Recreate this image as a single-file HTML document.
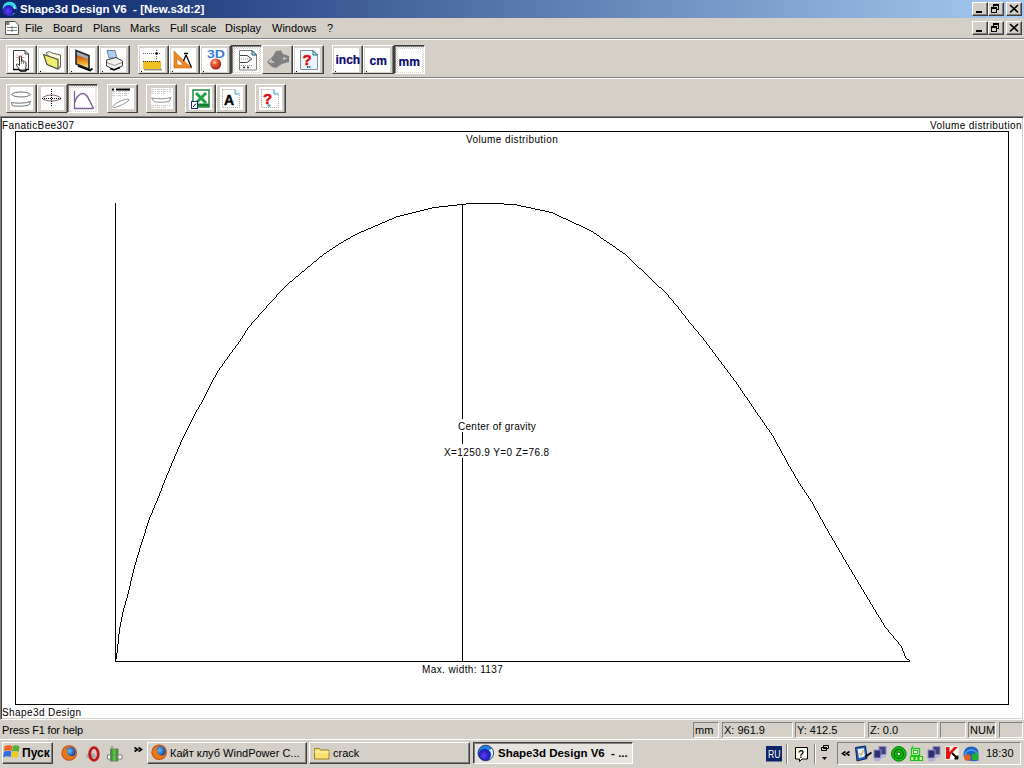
<!DOCTYPE html>
<html><head><meta charset="utf-8"><style>
html,body{margin:0;padding:0;}
body{width:1024px;height:768px;overflow:hidden;position:relative;background:#d4d0c8;font-family:"Liberation Sans",sans-serif;font-size:11px;color:#000;}
.a{position:absolute;}
#title{left:0;top:0;width:1024px;height:18px;background:linear-gradient(to right,#0a246a,#a6caf0);}
.tt{left:20px;top:1px;color:#fff;font-weight:bold;font-size:11.5px;line-height:16px;white-space:pre;}
.cb{width:16px;height:14px;background:#d4d0c8;box-sizing:border-box;border-top:1px solid #fff;border-left:1px solid #fff;border-right:1px solid #404040;border-bottom:1px solid #404040;box-shadow:inset -1px -1px 0 #808080;}
.menu{top:18px;height:20px;line-height:20px;font-size:11px;white-space:pre;}
.b{width:31px;height:29px;box-sizing:border-box;background:#fff;border-top:1px solid #fff;border-left:1px solid #fff;border-right:1px solid #404040;border-bottom:1px solid #404040;box-shadow:inset -1px 0 0 #808080,inset -3px -1px 0 #d4d0c8,inset 1px 2px 0 #d4d0c8;}
.b.v{box-shadow:inset -1px 0 0 #808080,inset -3px -2px 0 #d4d0c8,inset 3px 2px 0 #d4d0c8;}
.b.g{background:#d4d0c8;}
.b.w{box-shadow:inset -1px 0 0 #808080,inset -3px -3px 0 #d4d0c8,inset 4px 3px 0 #d4d0c8;}
.b.p{border-top:1px solid #404040;border-left:1px solid #404040;border-right:1px solid #fff;border-bottom:1px solid #fff;box-shadow:inset 1px 1px 0 #808080;background:repeating-conic-gradient(#d4d0c8 0 25%,#fff 0 50%) 0 0/2px 2px;}
.b.p::before{content:"";position:absolute;left:3px;top:3px;right:2px;bottom:1px;background:#fff;}
.b .d{position:absolute;left:2px;bottom:1px;width:1px;height:1px;background:#000;}
.st{top:722px;height:16px;box-sizing:border-box;border-top:1px solid #808080;border-left:1px solid #808080;border-right:1px solid #fff;border-bottom:1px solid #fff;font-size:11px;line-height:14px;padding-left:1px;white-space:pre;}
.tk{top:742px;height:22px;box-sizing:border-box;background:#d4d0c8;border-top:1px solid #fff;border-left:1px solid #fff;border-right:1px solid #404040;border-bottom:1px solid #404040;box-shadow:inset -1px -1px 0 #808080;font-size:11px;line-height:19px;white-space:pre;overflow:hidden;}
.ct{font-size:10px;letter-spacing:0.4px;white-space:pre;line-height:12px;}
</style></head><body>
<div id="title" class="a"><div class="a tt">Shape3d Design V6  - [New.s3d:2]</div></div>
<div class="a cb" style="left:972px;top:2px"></div>
<div class="a cb" style="left:972px;top:21px"></div>
<div class="a cb" style="left:988px;top:2px"></div>
<div class="a cb" style="left:988px;top:21px"></div>
<div class="a cb" style="left:1006px;top:2px"></div>
<div class="a cb" style="left:1006px;top:21px"></div>
<div class="a menu" style="left:25px">File</div>
<div class="a menu" style="left:53px">Board</div>
<div class="a menu" style="left:93px">Plans</div>
<div class="a menu" style="left:130px">Marks</div>
<div class="a menu" style="left:170px">Full scale</div>
<div class="a menu" style="left:225px">Display</div>
<div class="a menu" style="left:272px">Windows</div>
<div class="a menu" style="left:327px">?</div>
<div class="a" style="left:0;top:38px;width:1024px;height:1px;background:#808080"></div>
<div class="a" style="left:0;top:39px;width:1024px;height:1px;background:#fff"></div>
<div class="a b " style="left:6px;top:45px"></div>
<div class="a b " style="left:37px;top:45px"><div class="d"></div></div>
<div class="a b " style="left:68px;top:45px"><div class="d"></div></div>
<div class="a b " style="left:99px;top:45px"><div class="d"></div></div>
<div class="a b " style="left:138px;top:45px"><div class="d"></div></div>
<div class="a b " style="left:169px;top:45px"><div class="d"></div></div>
<div class="a b " style="left:200px;top:45px"><div class="d"></div></div>
<div class="a b p" style="left:231px;top:45px"></div>
<div class="a b g" style="left:262px;top:45px"></div>
<div class="a b " style="left:293px;top:45px"><div class="d"></div></div>
<div class="a b " style="left:332px;top:45px"><div class="d"></div></div>
<div class="a b " style="left:363px;top:45px"><div class="d"></div></div>
<div class="a b p" style="left:394px;top:45px"></div>
<div class="a" style="left:0;top:77px;width:1024px;height:1px;background:#808080"></div>
<div class="a" style="left:0;top:78px;width:1024px;height:1px;background:#fff"></div>
<div class="a b v" style="left:6px;top:84px"></div>
<div class="a b v" style="left:37px;top:84px"></div>
<div class="a b p" style="left:67px;top:84px"></div>
<div class="a b w" style="left:107px;top:84px"></div>
<div class="a b w" style="left:146px;top:84px"></div>
<div class="a b v" style="left:185px;top:84px"></div>
<div class="a b v" style="left:216px;top:84px"></div>
<div class="a b v" style="left:255px;top:84px"></div>
<div class="a" style="left:0;top:116px;width:1024px;height:604px;background:#fff;box-sizing:border-box;border-top:1px solid #808080;border-left:1px solid #808080;border-right:1px solid #fff;border-bottom:1px solid #fff;box-shadow:inset 1px 1px 0 #404040,inset -1px -1px 0 #d4d0c8"></div>
<div class="a" style="left:2px;top:723px;font-size:11px;line-height:14px;letter-spacing:-0.17px">Press F1 for help</div>
<div class="a st" style="left:693px;width:26px">mm</div>
<div class="a st" style="left:722px;width:71px">X: 961.9</div>
<div class="a st" style="left:795px;width:70px">Y: 412.5</div>
<div class="a st" style="left:868px;width:70px">Z: 0.0</div>
<div class="a st" style="left:940px;width:26px"></div>
<div class="a st" style="left:968px;width:28px">NUM</div>
<div class="a st" style="left:999px;width:24px"></div>
<div class="a" style="left:0;top:739px;width:1024px;height:29px;background:#d4d0c8;border-top:1px solid #fff"></div>
<div class="a tk" style="left:2px;width:51px;font-weight:bold;font-size:12px;padding-left:19px;line-height:20px">Пуск</div>
<div class="a tk" style="left:147px;width:160px;padding-left:22px;line-height:20px">Кайт клуб WindPower C...</div>
<div class="a tk" style="left:309px;width:161px;padding-left:23px;line-height:20px">crack</div>
<div class="a tk" style="left:473px;width:160px;padding-left:24px;font-weight:bold;font-size:11.5px;border-top:1px solid #404040;border-left:1px solid #404040;border-right:1px solid #fff;border-bottom:1px solid #fff;box-shadow:inset 1px 1px 0 #808080;background:#e6e3de;line-height:21px">Shape3d Design V6  - ...</div>
<div class="a" style="left:837px;top:742px;width:184px;height:23px;box-sizing:border-box;border-top:1px solid #808080;border-left:1px solid #808080;border-right:1px solid #fff;border-bottom:1px solid #fff"></div>
<div class="a" style="left:986px;top:746px;font-size:11px;line-height:14px">18:30</div>
<svg class="a" style="left:0;top:0" width="1024" height="768" viewBox="0 0 1024 768">
<defs>
<linearGradient id="fire" x1="0" y1="0" x2="0" y2="1"><stop offset="0" stop-color="#8090b0"/><stop offset="0.35" stop-color="#d06010"/><stop offset="0.7" stop-color="#f0b030"/><stop offset="1" stop-color="#fff8d0"/></linearGradient>
<radialGradient id="ball" cx="0.4" cy="0.35" r="0.65"><stop offset="0" stop-color="#ffe0c0"/><stop offset="0.35" stop-color="#f06040"/><stop offset="1" stop-color="#a02010"/></radialGradient>
<radialGradient id="globe" cx="0.45" cy="0.55" r="0.6"><stop offset="0" stop-color="#6040ff"/><stop offset="1" stop-color="#1010a0"/></radialGradient>
<pattern id="dots" width="2" height="2" patternUnits="userSpaceOnUse"><rect width="1" height="1" fill="#c0c0c0"/><rect x="1" y="1" width="1" height="1" fill="#c0c0c0"/></pattern>
</defs>
<!-- title icon -->
<clipPath id="gclip"><circle cx="9.7" cy="8.6" r="7.2"/></clipPath>
<g clip-path="url(#gclip)">
<circle cx="9.7" cy="8.6" r="7.2" fill="#38d8e8"/>
<circle cx="8.6" cy="10.6" r="5.6" fill="url(#globe)"/>
<circle cx="15.5" cy="11" r="2.5" fill="#102060"/>
</g>
<path d="M14 7 L15 9" stroke="#e0ffff" stroke-width="1.2"/>
<!-- menu doc icon -->
<path d="M5.5 21.5 H15 L18.5 25 V34.5 H5.5 Z" fill="#fff" stroke="#505050"/>
<rect x="6" y="22" width="3.5" height="3" fill="#808080"/>
<path d="M7 27.5 H17 M7 30.5 H17" stroke="#808080" stroke-width="1.2"/>
<path d="M12 26 V32" stroke="#606060" stroke-width="0.8"/>
<!-- title bar glyphs (both rows) -->
<g>
<rect x="976" y="11" width="6" height="2" fill="#000" shape-rendering="crispEdges"/>
<g shape-rendering="crispEdges">
<rect x="993" y="4" width="6" height="2" fill="#000"/><rect x="993" y="6" width="1" height="1" fill="#000"/><rect x="998" y="6" width="1" height="4" fill="#000"/><rect x="996" y="9" width="2" height="1" fill="#000"/>
<rect x="991" y="7" width="6" height="6" fill="#d4d0c8"/><rect x="991" y="7" width="6" height="2" fill="#000"/><rect x="991" y="9" width="1" height="4" fill="#000"/><rect x="996" y="9" width="1" height="4" fill="#000"/><rect x="991" y="12" width="6" height="1" fill="#000"/>
</g>
<path d="M1010 5 L1018 12.5 M1018 5 L1010 12.5" stroke="#000" stroke-width="1.7"/>
</g>
<g transform="translate(0,19)">
<rect x="976" y="11" width="6" height="2" fill="#000" shape-rendering="crispEdges"/>
<g shape-rendering="crispEdges">
<rect x="993" y="4" width="6" height="2" fill="#000"/><rect x="993" y="6" width="1" height="1" fill="#000"/><rect x="998" y="6" width="1" height="4" fill="#000"/><rect x="996" y="9" width="2" height="1" fill="#000"/>
<rect x="991" y="7" width="6" height="6" fill="#d4d0c8"/><rect x="991" y="7" width="6" height="2" fill="#000"/><rect x="991" y="9" width="1" height="4" fill="#000"/><rect x="996" y="9" width="1" height="4" fill="#000"/><rect x="991" y="12" width="6" height="1" fill="#000"/>
</g>
<path d="M1010 5 L1018 12.5 M1018 5 L1010 12.5" stroke="#000" stroke-width="1.7"/>
</g>

<!-- TB1 b1: doc + hand -->
<path d="M13.5 50.5 H25 L28.5 54 V69.5 H13.5 Z" fill="#fff" stroke="#404040"/>
<path d="M25 50.5 V54 H28.5" fill="none" stroke="#404040"/>
<path d="M13 69.5 H19 L20.5 71 H25.5 L26.5 69.5 H29" stroke="#000" stroke-width="1.6" fill="none"/>
<path d="M16.5 54.5 L23.5 60.5 M23.5 54.5 L16.5 60.5 M15.5 57.5 H24.5" stroke="#e89090" stroke-width="0.9"/>
<path d="M19.5 56.5 Q20.5 55.5 21.5 56.5 V61 L23 61 L24.5 61.5 L26 62.5 V67 L25 70 H20 L16.5 65.5 Q16 64 17.5 64 L19.5 65.5 Z" fill="#fff" stroke="#303030" stroke-width="1"/>
<path d="M21.5 61 V64 M23.5 61.5 V64" stroke="#606060" stroke-width="0.8"/>
<!-- TB1 b2: folder -->
<path d="M46 53 L49.5 51.5 L52 53 L60.5 55 V66.5 L58 69 Z" fill="#fffbe0" stroke="#606050"/>
<path d="M43.5 54.5 L58 59.5 V69 L47 64.5 Z" fill="#eef070" stroke="#505040" stroke-width="1.2"/>
<path d="M58 69 L61 66" stroke="#707070" stroke-width="1.5"/>
<!-- TB1 b3: picture -->
<path d="M76 50.5 L89 55.5 V69 L76 64 Z" fill="url(#fire)" stroke="#202830" stroke-width="1.6"/>
<path d="M77 52 L88 56.5 V59 L77 55 Z" fill="#a0b0c8"/>
<path d="M78 66 L90 70.5 L92.5 68.5" stroke="#000" stroke-width="1.8" fill="none"/>
<!-- TB1 b4: printer -->
<path d="M107 50.5 H115 L117 58 H109 Z" fill="#b0d0f0" stroke="#7080a0"/>
<path d="M106.5 60 L116 57.5 L122.5 61 V66 L114 69.5 L106.5 66 Z" fill="#f0f0f0" stroke="#404040"/>
<path d="M107 62.5 L114.5 65.5 L122 62.5" stroke="#909090" fill="none"/>
<path d="M110 68.5 L114 70 L120 67.5" stroke="#000" stroke-width="1.4" fill="none"/>
<!-- TB1 b5: ruler -->
<path d="M143 53.5 H161" stroke="#606060" stroke-dasharray="1 1"/>
<path d="M156.5 50 V60" stroke="#606060" stroke-dasharray="1 1"/>
<rect x="155.5" y="52.5" width="2" height="2" fill="#000"/>
<rect x="143" y="61" width="18" height="8" fill="#f0c020"/>
<path d="M143 61.5 H161" stroke="#303030" stroke-dasharray="1 1"/>
<rect x="144" y="69" width="18" height="1.5" fill="#909090"/>
<!-- TB1 b6: triangle+compass -->
<path d="M174 51 L191.5 68 H174 Z M177 58.5 V65 H183.5 Z" fill="#f08a20" fill-rule="evenodd" stroke="#c06010" stroke-width="0.6"/>
<path d="M186 55 L183.5 61 M186 55 L191.5 67.5" stroke="#000" stroke-width="1.3"/>
<path d="M184 53.5 H188" stroke="#000" stroke-width="1.5"/>
<!-- TB1 b7: 3D ball -->
<text x="207" y="57.5" font-family="Liberation Sans" font-weight="bold" font-size="10" fill="#3c7ce0" textLength="18" lengthAdjust="spacingAndGlyphs">3D</text>
<circle cx="215.7" cy="64" r="5.5" fill="url(#ball)"/>
<!-- TB1 b8: doc with board -->
<path d="M239.5 50.5 H252 L256.5 55 V70 H239.5 Z" fill="#fff" stroke="#808080"/>
<path d="M252 50.5 V55 H256.5 Z" fill="#c0f0ff" stroke="#205060"/>
<path d="M240 55.5 H247 L252 59 L247 62.5 H240" fill="none" stroke="#404040"/>
<path d="M241 59 H253 M241 65.5 H253" stroke="#909090" stroke-dasharray="1 1"/>
<path d="M243 67.5 h2 M247 67.5 h2" stroke="#303030" stroke-width="1.3"/>
<!-- TB1 b9: disabled gray -->
<path d="M267 62 L273 56 L276 51 L281 50.5 L283 54 L289 56 V62 L282 64 L276 68 L272 67 Z" fill="#808080"/>
<path d="M269 62 L272 59.5 M270 62 H274 M284 57 V60 M286 58 V59" stroke="#fff" stroke-width="0.9"/>
<!-- TB1 b10: ? doc -->
<path d="M300.5 50.5 H313 L317.5 55 V69.5 H300.5 Z" fill="#e8f6fa" stroke="#8090a0"/>
<path d="M313 50.5 V55 H317.5 Z" fill="#d0f0ff" stroke="#206080"/>
<text x="302.5" y="64.5" font-family="Liberation Sans" font-weight="bold" font-size="15" fill="#d81010" stroke="#d81010" stroke-width="0.5">?</text>
<rect x="307" y="66" width="1.5" height="2" fill="#604080"/><rect x="309" y="66" width="1.5" height="2" fill="#20a0a0"/>
<!-- inch cm mm -->
<text x="335.5" y="64.3" font-family="Liberation Sans" font-weight="bold" font-size="12" fill="#0a0a70" stroke="#0a0a70" stroke-width="0.2">inch</text>
<text x="369.5" y="64.5" font-family="Liberation Sans" font-weight="bold" font-size="12" fill="#0a0a70" stroke="#0a0a70" stroke-width="0.2">cm</text>
<text x="398.5" y="65.6" font-family="Liberation Sans" font-weight="bold" font-size="12" fill="#0a0a70" stroke="#0a0a70" stroke-width="0.2">mm</text>

<!-- TB2 b1: hull outlines -->
<path d="M11.5 94.5 C14 91.2 28 91.2 30.5 94.5 C28 97.8 14 97.8 11.5 94.5 Z" fill="none" stroke="#707070"/>
<path d="M11.5 102.5 C16 103.5 26 103.5 30.5 101.5 L29 105 C24 106.5 15 106.5 12 105.5 Z" fill="none" stroke="#707070"/>
<!-- TB2 b2: lens with cross -->
<path d="M42 98.5 C46 93.8 57 93.8 61 98.5 C57 101.8 46 101.8 42 98.5 Z" fill="none" stroke="#806070"/>
<g shape-rendering="crispEdges"><path d="M51.5 89 V107 M42 98.5 H61" stroke="#000" stroke-dasharray="1 1"/></g>
<!-- TB2 b3: volume icon -->
<path d="M74.5 91 V108.5 H93.5" fill="none" stroke="#806098" stroke-width="1.3"/>
<path d="M75 102 C76 98 78.5 95 81 93.8 C83 93 85 93.5 87 96 C89 99 91 104 93.5 108.5" fill="none" stroke="#806098" stroke-width="1.4"/>
<!-- TB2 b4 -->
<rect x="112" y="88.5" width="2" height="2" fill="#000"/>
<rect x="116" y="88.5" width="14" height="2" fill="#000"/>
<path d="M112 91.5 h18 M112 93.5 h18 M112 95.5 h16" stroke="#b4b4b4" stroke-dasharray="3 1 1 1" stroke-width="0.7"/>
<path d="M113 106 C115 103 126 98 129 99.5 C130 101 118 107 115 107.5 C113.5 107.8 112.5 107 113 106 Z" fill="none" stroke="#909090"/>
<!-- TB2 b5 -->
<path d="M151 89.5 h20 M151 91.5 h20 M151 93.5 h14 M151 105.5 h20 M151 107.5 h16" stroke="#b4b4b4" stroke-dasharray="3 1 1 1" stroke-width="0.7"/>
<path d="M151.5 98 C157 99 166 99 171 97.5 L169 101.5 C164 102.5 157 102.5 154 101.5 Z" fill="none" stroke="#909090"/>
<!-- TB2 b6: excel -->
<rect x="193" y="90" width="16" height="17" fill="#fff" stroke="#108030" stroke-width="1.4"/>
<path d="M196 93 L206 103 M206 93 L196 103" stroke="#20a040" stroke-width="3"/>
<rect x="193" y="103.5" width="16" height="3" fill="#108030"/>
<rect x="191.5" y="101.5" width="6" height="7" fill="#fff" stroke="#203080"/>
<path d="M193 107 L196 103.5" stroke="#000"/>
<!-- TB2 b7: A doc -->
<path d="M222.5 89.5 H235 L239.5 94 V107.5 H222.5 Z" fill="#fff" stroke="#a0a0a0" stroke-dasharray="1 1"/>
<path d="M235 89.5 V94 H239.5" fill="#e0f8ff" stroke="#40a0c0"/>
<text x="224" y="104.5" font-family="Liberation Sans" font-weight="bold" font-size="14" fill="#000" stroke="#000" stroke-width="0.4">A</text>
<!-- TB2 b8: ? doc -->
<path d="M261.5 89.5 H274 L278.5 94 V107.5 H261.5 Z" fill="#fff" stroke="#a0a0a0" stroke-dasharray="1 1"/>
<path d="M274 89.5 V94 H278.5" fill="#e0f8ff" stroke="#40a0c0"/>
<text x="263" y="104" font-family="Liberation Sans" font-weight="bold" font-size="15" fill="#d81010" stroke="#d81010" stroke-width="0.5">?</text>
<rect x="267.5" y="104.5" width="3" height="2" fill="#40a0a0"/>


<defs>
<radialGradient id="ffx" cx="0.5" cy="0.5" r="0.5"><stop offset="0" stop-color="#f8c040"/><stop offset="0.8" stop-color="#e87010"/><stop offset="1" stop-color="#b04010"/></radialGradient>
<radialGradient id="ffb" cx="0.4" cy="0.4" r="0.6"><stop offset="0" stop-color="#60c0ff"/><stop offset="1" stop-color="#1040a0"/></radialGradient>
<linearGradient id="grn" x1="0" y1="0" x2="1" y2="0"><stop offset="0" stop-color="#208020"/><stop offset="0.5" stop-color="#60d040"/><stop offset="1" stop-color="#208020"/></linearGradient>
<radialGradient id="s3d" cx="0.4" cy="0.4" r="0.6"><stop offset="0" stop-color="#40a0ff"/><stop offset="1" stop-color="#1020a0"/></radialGradient>
</defs>
<!-- start logo -->
<path d="M4.5 746.5 Q8 744.5 12.5 746 L11.5 751 Q7.5 749.5 4 751.5 Z" fill="#e86420"/>
<path d="M13 746 Q16 744.5 19.5 746.5 L18.5 752 Q15.5 750.5 12 751.5 Z" fill="#50b030"/>
<path d="M4 752 Q7.5 750 11.5 751.5 L10.5 757 Q7 755.5 3 757.5 Z" fill="#3070e0"/>
<path d="M12 752 Q15.5 750.5 18.5 752.5 L17.5 758 Q14.5 756.5 11 757.5 Z" fill="#f0c820"/>
<!-- quick launch firefox -->
<circle cx="69.2" cy="753" r="7.8" fill="url(#ffx)"/>
<circle cx="70.5" cy="752" r="5" fill="url(#ffb)"/>
<path d="M62 751 Q63 757 69 758.5 Q73 758.5 75 756 Q71 757 68.5 755 Q66.5 753 67.5 749.5 Q65 750 64.5 752 Z" fill="#e87818"/>
<!-- opera -->
<ellipse cx="91" cy="756" rx="5" ry="3" fill="#909090" opacity="0.6"/>
<ellipse cx="94" cy="754" rx="4.3" ry="6.3" fill="none" stroke="#c01818" stroke-width="2.8"/>
<!-- phone quick -->
<rect x="110.5" y="749" width="7.5" height="12" fill="url(#grn)" stroke="#708070"/>
<path d="M112 749 V746" stroke="#809080" stroke-width="1.5"/>
<path d="M107.5 755 h3 v4 h-3z M118 755 h4 v4 h-4z" fill="#fff" stroke="#808080"/>
<path d="M111 755 H118" stroke="#708070"/>
<!-- >> -->
<path d="M134.5 747.5 L137.5 749.5 L134.5 751.5 M138.5 747.5 L141.5 749.5 L138.5 751.5" fill="none" stroke="#000" stroke-width="1.6"/>
<!-- task firefox -->
<circle cx="159.2" cy="752.3" r="7.8" fill="url(#ffx)"/>
<circle cx="160.5" cy="751.3" r="5" fill="url(#ffb)"/>
<path d="M152 750.3 Q153 756.3 159 757.8 Q163 757.8 165 755.3 Q161 756.3 158.5 754.3 Q156.5 752.3 157.5 748.8 Q155 749.3 154.5 751.3 Z" fill="#e87818"/>
<!-- folder crack -->
<path d="M314.5 748.5 h5 l1 1.5 h8.5 v9 h-14.5 z" fill="#f8e070" stroke="#a08020"/>
<path d="M314.5 752 h14.5" stroke="#fff8c0"/>
<!-- shape3d task icon -->
<clipPath id="tclip"><circle cx="485.8" cy="753" r="7.8"/></clipPath>
<g clip-path="url(#tclip)">
<circle cx="485.8" cy="753" r="7.8" fill="#2080e0"/>
<circle cx="484.5" cy="755" r="6" fill="url(#globe)"/>
<path d="M489 750 Q493 753 490 759 L494 760 V748 Z" fill="#f0f8ff"/>
</g>
<circle cx="485.8" cy="753" r="7.8" fill="none" stroke="#102060" stroke-width="0.8"/>
<!-- RU -->
<rect x="766" y="746" width="16" height="15.5" fill="#0a246a"/>
<text x="768" y="757.6" font-family="Liberation Sans" font-size="10" fill="#fff" textLength="12.5" lengthAdjust="spacingAndGlyphs">RU</text>
<!-- separators -->
<path d="M786.5 744 V764" stroke="#808080"/><path d="M787.5 744 V764" stroke="#fff"/>
<path d="M814.5 744 V764" stroke="#808080"/><path d="M815.5 744 V764" stroke="#fff"/>
<!-- help bubble -->
<path d="M795.5 747.5 H807.5 V759 H802 L799.5 761.5 V759 H795.5 Z" fill="#fffff0" stroke="#000"/>
<text x="798" y="757.5" font-family="Liberation Sans" font-weight="bold" font-size="10" fill="#000">?</text>
<!-- restore glyph -->
<path d="M823.5 745.5 h5 v3 h-5z M821.5 747.5 h5 v3 h-5z" fill="#d4d0c8" stroke="#000"/>
<path d="M822 757 h5 l-2.5 3 z" fill="#000"/>
<!-- << -->
<path d="M845.5 751.5 L842.5 753.5 L845.5 755.5 M849.5 751.5 L846.5 753.5 L849.5 755.5" fill="none" stroke="#000" stroke-width="1.6"/>
<!-- tray icon1 doc -->
<path d="M855.5 747.5 L865.5 746 L867 758.5 L857 761 Z" fill="#2060c0" stroke="#102050"/>
<path d="M857.5 749 L864 748.3 L865 756.5 L859 758 Z" fill="#e8f0ff"/>
<path d="M859.5 753 L861 755.5 L863.5 750" fill="none" stroke="#e0a020" stroke-width="1"/>
<path d="M865 757 L871.5 752.5" stroke="#101010" stroke-width="2"/>
<!-- tray network -->
<rect x="879" y="746.5" width="7" height="8" fill="#404080" stroke="#9090c0"/>
<rect x="874" y="750" width="7" height="8" fill="#303070" stroke="#9090c0"/>
<ellipse cx="877.5" cy="760" rx="3.5" ry="1.3" fill="#b0b0e0"/>
<ellipse cx="883" cy="756.5" rx="3" ry="1.2" fill="#b0b0e0"/>
<!-- green circle -->
<circle cx="898.8" cy="753.9" r="7.3" fill="#10c010" stroke="#008000"/>
<circle cx="898.8" cy="753.9" r="4.5" fill="none" stroke="#006000" stroke-width="1.2"/>
<circle cx="898.8" cy="753.9" r="1.8" fill="#e0ffe0" stroke="#006000"/>
<!-- green phone tray -->
<path d="M912.5 745.5 V748" stroke="#30d030" stroke-width="1.4"/>
<rect x="911.5" y="748.5" width="8" height="7" fill="#b0ff90" stroke="#20c020" stroke-width="1.3"/>
<rect x="913.5" y="750.5" width="4" height="3" fill="#fff" stroke="#20a020" stroke-width="0.8"/>
<path d="M910.5 756.5 h3.5 v4 h-3.5z M915 756.5 h3 v4 h-3z M919 756.5 h3.5 v4 h-3.5z" fill="#c0ff90" stroke="#20c020" stroke-width="1.2"/>
<!-- tray network 2 -->
<rect x="933" y="746.5" width="7" height="8" fill="#404080" stroke="#9090c0"/>
<rect x="928" y="750" width="7" height="8" fill="#303070" stroke="#9090c0"/>
<ellipse cx="931.5" cy="760" rx="3.5" ry="1.3" fill="#b0b0e0"/>
<ellipse cx="937" cy="756.5" rx="3" ry="1.2" fill="#b0b0e0"/>
<!-- kaspersky -->
<rect x="945.5" y="746.5" width="13" height="13" fill="#fff"/>
<path d="M946 747 H949.5 V752 L954 747 H958 L951 754 L949.5 759 H946 Z" fill="#e81010"/>
<path d="M952 753 L957 758 M954.5 758.5 H957.5 V755.5" stroke="#000" stroke-width="1.8" fill="none"/>
<!-- blue/orange icon -->
<path d="M963.5 756 Q963 747 971 746.5 Q978.5 746.5 978.5 753 V760.5 Q972 762 966 760 Z" fill="#2060c0"/>
<path d="M965 755 Q966 750 972 750 Q977 751 977.5 755" fill="none" stroke="#40a0ff" stroke-width="1.5"/>
<circle cx="967.5" cy="757.5" r="3.3" fill="#e06020"/>
<path d="M972 754 L978 753 V760 L972 760 Z" fill="#20b030"/>

<g shape-rendering="crispEdges"><rect x="15.5" y="131.5" width="993" height="573" fill="none" stroke="#000"/>
<path d="M115.5 203 V661.5 H910" fill="none" stroke="#000"/>
<path d="M462.5 204 V661" fill="none" stroke="#000"/>
<rect x="455" y="419" width="84" height="13" fill="#fff"/><rect x="442" y="444" width="110" height="14" fill="#fff"/>
</g>
<path d="M396 216h4v1h-4zM559 216h2v1h-2zM382 222h3v1h-3zM572 222h2v1h-2zM392 218h2v1h-2zM563 218h3v1h-3zM320 256h2v1h-2zM404 214h4v1h-4zM555 214h2v1h-2zM448 205h9v1h-9zM517 205h4v1h-4zM357 233h2v1h-2zM594 233h2v1h-2zM341 242h2v1h-2zM607 242h2v1h-2zM302 271h2v1h-2zM424 209h4v1h-4zM535 209h5v1h-5zM366 229h2v1h-2zM587 229h2v1h-2zM466 203h38v1h-38zM389 219h3v1h-3zM566 219h2v1h-2zM339 243h2v1h-2zM457 204h9v1h-9zM504 204h13v1h-13zM361 231h3v1h-3zM591 231h2v1h-2zM907 659h2v1h-2zM344 240h2v1h-2zM604 240h2v1h-2zM324 253h2v1h-2zM623 253h2v1h-2zM428 208h4v1h-4zM531 208h4v1h-4zM439 206h9v1h-9zM521 206h5v1h-5zM408 213h4v1h-4zM553 213h2v1h-2zM353 235h2v1h-2zM597 235h2v1h-2zM387 220h2v1h-2zM568 220h2v1h-2zM314 261h2v1h-2zM432 207h7v1h-7zM526 207h5v1h-5zM364 230h2v1h-2zM589 230h2v1h-2zM420 210h4v1h-4zM540 210h5v1h-5zM373 226h2v1h-2zM581 226h2v1h-2zM659 287h2v1h-2zM333 247h2v1h-2zM416 211h4v1h-4zM545 211h4v1h-4zM296 276h2v1h-2zM368 228h3v1h-3zM585 228h2v1h-2zM639 268h2v1h-2zM359 232h2v1h-2zM394 217h2v1h-2zM561 217h2v1h-2zM355 234h2v1h-2zM330 249h2v1h-2zM617 249h2v1h-2zM290 281h2v1h-2zM400 215h4v1h-4zM557 215h2v1h-2zM378 224h2v1h-2zM576 224h3v1h-3zM412 212h4v1h-4zM549 212h4v1h-4zM351 236h2v1h-2zM375 225h3v1h-3zM579 225h2v1h-2zM610 244h2v1h-2zM371 227h2v1h-2zM583 227h2v1h-2zM613 246h2v1h-2zM308 266h2v1h-2zM348 238h2v1h-2zM601 238h2v1h-2zM327 251h2v1h-2zM620 251h2v1h-2zM336 245h2v1h-2zM385 221h2v1h-2zM570 221h2v1h-2zM346 239h2v1h-2zM380 223h2v1h-2zM574 223h2v1h-2zM115 659h1v3h-1zM116 653h1v6h-1zM117 644h1v9h-1zM118 634h1v10h-1zM119 627h1v7h-1zM120 622h1v5h-1zM121 617h1v5h-1zM122 612h1v5h-1zM123 608h1v4h-1zM124 605h1v3h-1zM125 601h1v4h-1zM126 598h1v3h-1zM127 594h1v4h-1zM128 590h1v4h-1zM129 586h1v4h-1zM130 581h1v5h-1zM131 577h1v4h-1zM132 573h1v4h-1zM133 569h1v4h-1zM134 565h1v4h-1zM135 562h1v3h-1zM136 558h1v4h-1zM137 555h1v3h-1zM138 552h1v3h-1zM139 548h1v4h-1zM140 545h1v3h-1zM141 542h1v3h-1zM142 539h1v3h-1zM143 536h1v3h-1zM144 533h1v3h-1zM145 529h1v4h-1zM146 526h1v3h-1zM147 523h1v3h-1zM148 520h1v3h-1zM149 517h1v3h-1zM150 515h1v2h-1zM151 513h1v2h-1zM152 510h1v3h-1zM153 508h1v2h-1zM154 505h1v3h-1zM155 503h1v2h-1zM156 501h1v2h-1zM157 498h1v3h-1zM158 496h1v2h-1zM159 493h1v3h-1zM160 491h1v2h-1zM161 488h1v3h-1zM162 485h1v3h-1zM163 483h1v2h-1zM164 480h1v3h-1zM165 478h1v2h-1zM166 475h1v3h-1zM167 473h1v2h-1zM168 471h1v2h-1zM169 468h1v3h-1zM170 466h1v2h-1zM171 463h1v3h-1zM172 461h1v2h-1zM173 459h1v2h-1zM174 456h1v3h-1zM175 454h1v2h-1zM176 452h1v2h-1zM177 449h1v3h-1zM178 447h1v2h-1zM179 445h1v2h-1zM180 442h1v3h-1zM181 440h1v2h-1zM182 438h1v2h-1zM183 436h1v2h-1zM184 434h1v2h-1zM185 432h1v2h-1zM186 430h1v2h-1zM187 428h1v2h-1zM188 426h1v2h-1zM189 424h1v2h-1zM190 422h1v2h-1zM191 420h1v2h-1zM192 418h1v2h-1zM193 416h1v2h-1zM194 414h1v2h-1zM195 412h1v2h-1zM196 410h1v2h-1zM197 409h1v1h-1zM198 407h1v2h-1zM199 405h1v2h-1zM200 404h1v1h-1zM201 402h1v2h-1zM202 400h1v2h-1zM203 398h1v2h-1zM204 396h1v2h-1zM205 394h1v2h-1zM206 392h1v2h-1zM207 390h1v2h-1zM208 388h1v2h-1zM209 386h1v2h-1zM210 384h1v2h-1zM211 382h1v2h-1zM212 380h1v2h-1zM213 378h1v2h-1zM214 377h1v1h-1zM215 375h1v2h-1zM216 373h1v2h-1zM217 371h1v2h-1zM218 370h1v1h-1zM219 368h1v2h-1zM220 367h1v1h-1zM221 366h1v1h-1zM222 364h1v2h-1zM223 363h1v1h-1zM224 361h1v2h-1zM225 360h1v1h-1zM226 359h1v1h-1zM227 357h1v2h-1zM228 356h1v1h-1zM229 354h1v2h-1zM230 353h1v1h-1zM231 352h1v1h-1zM232 350h1v2h-1zM233 349h1v1h-1zM234 348h1v1h-1zM235 346h1v2h-1zM236 345h1v1h-1zM237 344h1v1h-1zM238 342h1v2h-1zM239 341h1v1h-1zM240 339h1v2h-1zM241 338h1v1h-1zM242 336h1v2h-1zM243 335h1v1h-1zM244 333h1v2h-1zM245 331h1v2h-1zM246 330h1v1h-1zM247 328h1v2h-1zM248 327h1v1h-1zM249 326h1v1h-1zM250 325h1v1h-1zM251 323h1v2h-1zM252 322h1v1h-1zM253 321h1v1h-1zM254 320h1v1h-1zM255 319h1v1h-1zM256 318h1v1h-1zM257 317h1v1h-1zM258 315h1v2h-1zM259 314h1v1h-1zM260 313h1v1h-1zM261 312h1v1h-1zM262 311h1v1h-1zM263 310h1v1h-1zM264 309h1v1h-1zM265 308h1v1h-1zM266 306h1v2h-1zM267 305h1v1h-1zM268 304h1v1h-1zM269 303h1v1h-1zM270 302h1v1h-1zM271 301h1v1h-1zM272 300h1v1h-1zM273 299h1v1h-1zM274 298h1v1h-1zM275 297h1v1h-1zM276 295h1v2h-1zM277 294h1v1h-1zM278 293h1v1h-1zM279 292h1v1h-1zM280 291h1v1h-1zM281 290h1v1h-1zM282 289h1v1h-1zM283 288h1v1h-1zM284 287h1v1h-1zM285 286h1v1h-1zM286 285h1v1h-1zM287 284h1v1h-1zM288 283h1v1h-1zM289 282h1v1h-1zM292 280h1v1h-1zM293 279h1v1h-1zM294 278h1v1h-1zM295 277h1v1h-1zM298 275h1v1h-1zM299 274h1v1h-1zM300 273h1v1h-1zM301 272h1v1h-1zM304 270h1v1h-1zM305 269h1v1h-1zM306 268h1v1h-1zM307 267h1v1h-1zM310 265h1v1h-1zM311 264h1v1h-1zM312 263h1v1h-1zM313 262h1v1h-1zM316 260h1v1h-1zM317 259h1v1h-1zM318 258h1v1h-1zM319 257h1v1h-1zM322 255h1v1h-1zM323 254h1v1h-1zM326 252h1v1h-1zM329 250h1v1h-1zM332 248h1v1h-1zM335 246h1v1h-1zM338 244h1v1h-1zM343 241h1v1h-1zM350 237h1v1h-1zM593 232h1v1h-1zM596 234h1v1h-1zM599 236h1v1h-1zM600 237h1v1h-1zM603 239h1v1h-1zM606 241h1v1h-1zM609 243h1v1h-1zM612 245h1v1h-1zM615 247h1v1h-1zM616 248h1v1h-1zM619 250h1v1h-1zM622 252h1v1h-1zM625 254h1v1h-1zM626 255h1v1h-1zM627 256h1v1h-1zM628 257h1v1h-1zM629 258h1v1h-1zM630 259h1v1h-1zM631 260h1v1h-1zM632 261h1v1h-1zM633 262h1v1h-1zM634 263h1v1h-1zM635 264h1v1h-1zM636 265h1v1h-1zM637 266h1v1h-1zM638 267h1v1h-1zM641 269h1v1h-1zM642 270h1v1h-1zM643 271h1v1h-1zM644 272h1v1h-1zM645 273h1v1h-1zM646 274h1v1h-1zM647 275h1v1h-1zM648 276h1v1h-1zM649 277h1v1h-1zM650 278h1v1h-1zM651 279h1v1h-1zM652 280h1v1h-1zM653 281h1v1h-1zM654 282h1v1h-1zM655 283h1v1h-1zM656 284h1v1h-1zM657 285h1v1h-1zM658 286h1v1h-1zM661 288h1v1h-1zM662 289h1v1h-1zM663 290h1v1h-1zM664 291h1v1h-1zM665 292h1v1h-1zM666 293h1v1h-1zM667 294h1v1h-1zM668 295h1v2h-1zM669 297h1v1h-1zM670 298h1v1h-1zM671 299h1v1h-1zM672 300h1v1h-1zM673 301h1v2h-1zM674 303h1v1h-1zM675 304h1v1h-1zM676 305h1v1h-1zM677 306h1v1h-1zM678 307h1v2h-1zM679 309h1v1h-1zM680 310h1v1h-1zM681 311h1v2h-1zM682 313h1v1h-1zM683 314h1v1h-1zM684 315h1v1h-1zM685 316h1v2h-1zM686 318h1v1h-1zM687 319h1v1h-1zM688 320h1v2h-1zM689 322h1v1h-1zM690 323h1v1h-1zM691 324h1v1h-1zM692 325h1v1h-1zM693 326h1v2h-1zM694 328h1v1h-1zM695 329h1v1h-1zM696 330h1v1h-1zM697 331h1v1h-1zM698 332h1v2h-1zM699 334h1v1h-1zM700 335h1v1h-1zM701 336h1v1h-1zM702 337h1v1h-1zM703 338h1v2h-1zM704 340h1v1h-1zM705 341h1v1h-1zM706 342h1v2h-1zM707 344h1v1h-1zM708 345h1v1h-1zM709 346h1v2h-1zM710 348h1v1h-1zM711 349h1v1h-1zM712 350h1v2h-1zM713 352h1v1h-1zM714 353h1v1h-1zM715 354h1v2h-1zM716 356h1v1h-1zM717 357h1v1h-1zM718 358h1v2h-1zM719 360h1v1h-1zM720 361h1v1h-1zM721 362h1v2h-1zM722 364h1v1h-1zM723 365h1v1h-1zM724 366h1v2h-1zM725 368h1v1h-1zM726 369h1v1h-1zM727 370h1v2h-1zM728 372h1v1h-1zM729 373h1v1h-1zM730 374h1v2h-1zM731 376h1v1h-1zM732 377h1v1h-1zM733 378h1v2h-1zM734 380h1v1h-1zM735 381h1v1h-1zM736 382h1v2h-1zM737 384h1v1h-1zM738 385h1v2h-1zM739 387h1v1h-1zM740 388h1v2h-1zM741 390h1v1h-1zM742 391h1v2h-1zM743 393h1v1h-1zM744 394h1v2h-1zM745 396h1v1h-1zM746 397h1v1h-1zM747 398h1v2h-1zM748 400h1v1h-1zM749 401h1v2h-1zM750 403h1v1h-1zM751 404h1v2h-1zM752 406h1v1h-1zM753 407h1v2h-1zM754 409h1v1h-1zM755 410h1v2h-1zM756 412h1v1h-1zM757 413h1v2h-1zM758 415h1v1h-1zM759 416h1v1h-1zM760 417h1v2h-1zM761 419h1v1h-1zM762 420h1v2h-1zM763 422h1v1h-1zM764 423h1v2h-1zM765 425h1v1h-1zM766 426h1v2h-1zM767 428h1v1h-1zM768 429h1v1h-1zM769 430h1v2h-1zM770 432h1v1h-1zM771 433h1v2h-1zM772 435h1v1h-1zM773 436h1v2h-1zM774 438h1v2h-1zM775 440h1v2h-1zM776 442h1v2h-1zM777 444h1v2h-1zM778 446h1v1h-1zM779 447h1v2h-1zM780 449h1v2h-1zM781 451h1v2h-1zM782 453h1v2h-1zM783 455h1v1h-1zM784 456h1v2h-1zM785 458h1v2h-1zM786 460h1v2h-1zM787 462h1v2h-1zM788 464h1v2h-1zM789 466h1v1h-1zM790 467h1v2h-1zM791 469h1v2h-1zM792 471h1v1h-1zM793 472h1v2h-1zM794 474h1v2h-1zM795 476h1v2h-1zM796 478h1v1h-1zM797 479h1v2h-1zM798 481h1v2h-1zM799 483h1v1h-1zM800 484h1v2h-1zM801 486h1v1h-1zM802 487h1v2h-1zM803 489h1v1h-1zM804 490h1v2h-1zM805 492h1v1h-1zM806 493h1v2h-1zM807 495h1v1h-1zM808 496h1v2h-1zM809 498h1v1h-1zM810 499h1v2h-1zM811 501h1v1h-1zM812 502h1v2h-1zM813 504h1v2h-1zM814 506h1v2h-1zM815 508h1v2h-1zM816 510h1v1h-1zM817 511h1v2h-1zM818 513h1v2h-1zM819 515h1v2h-1zM820 517h1v2h-1zM821 519h1v1h-1zM822 520h1v2h-1zM823 522h1v2h-1zM824 524h1v2h-1zM825 526h1v2h-1zM826 528h1v1h-1zM827 529h1v2h-1zM828 531h1v2h-1zM829 533h1v2h-1zM830 535h1v1h-1zM831 536h1v2h-1zM832 538h1v2h-1zM833 540h1v1h-1zM834 541h1v2h-1zM835 543h1v2h-1zM836 545h1v2h-1zM837 547h1v1h-1zM838 548h1v2h-1zM839 550h1v2h-1zM840 552h1v1h-1zM841 553h1v2h-1zM842 555h1v2h-1zM843 557h1v2h-1zM844 559h1v1h-1zM845 560h1v2h-1zM846 562h1v2h-1zM847 564h1v1h-1zM848 565h1v2h-1zM849 567h1v2h-1zM850 569h1v1h-1zM851 570h1v2h-1zM852 572h1v2h-1zM853 574h1v1h-1zM854 575h1v2h-1zM855 577h1v2h-1zM856 579h1v1h-1zM857 580h1v2h-1zM858 582h1v2h-1zM859 584h1v1h-1zM860 585h1v2h-1zM861 587h1v2h-1zM862 589h1v1h-1zM863 590h1v2h-1zM864 592h1v2h-1zM865 594h1v1h-1zM866 595h1v2h-1zM867 597h1v2h-1zM868 599h1v1h-1zM869 600h1v2h-1zM870 602h1v2h-1zM871 604h1v1h-1zM872 605h1v2h-1zM873 607h1v2h-1zM874 609h1v1h-1zM875 610h1v2h-1zM876 612h1v2h-1zM877 614h1v1h-1zM878 615h1v2h-1zM879 617h1v1h-1zM880 618h1v2h-1zM881 620h1v2h-1zM882 622h1v1h-1zM883 623h1v2h-1zM884 625h1v2h-1zM885 627h1v1h-1zM886 628h1v1h-1zM887 629h1v1h-1zM888 630h1v2h-1zM889 632h1v1h-1zM890 633h1v1h-1zM891 634h1v1h-1zM892 635h1v1h-1zM893 636h1v2h-1zM894 638h1v1h-1zM895 639h1v1h-1zM896 640h1v1h-1zM897 641h1v1h-1zM898 642h1v2h-1zM899 644h1v1h-1zM900 645h1v1h-1zM901 646h1v2h-1zM902 648h1v3h-1zM903 651h1v2h-1zM904 653h1v3h-1zM905 656h1v2h-1zM906 658h1v1h-1zM909 660h1v1h-1z" fill="#000" shape-rendering="crispEdges"/></svg>
<div class="a ct" style="left:2px;top:120px;">FanaticBee307</div>
<div class="a ct" style="right:2px;top:120px">Volume distribution</div>
<div class="a ct" style="left:466px;top:134px;">Volume distribution</div>
<div class="a ct" style="left:458px;top:421px;letter-spacing:0.28px;">Center of gravity</div>
<div class="a ct" style="left:444px;top:447px;">X=1250.9 Y=0 Z=76.8</div>
<div class="a ct" style="left:422px;top:664px;">Max. width: 1137</div>
<div class="a ct" style="left:2px;top:707px;">Shape3d Design</div>
</body></html>
